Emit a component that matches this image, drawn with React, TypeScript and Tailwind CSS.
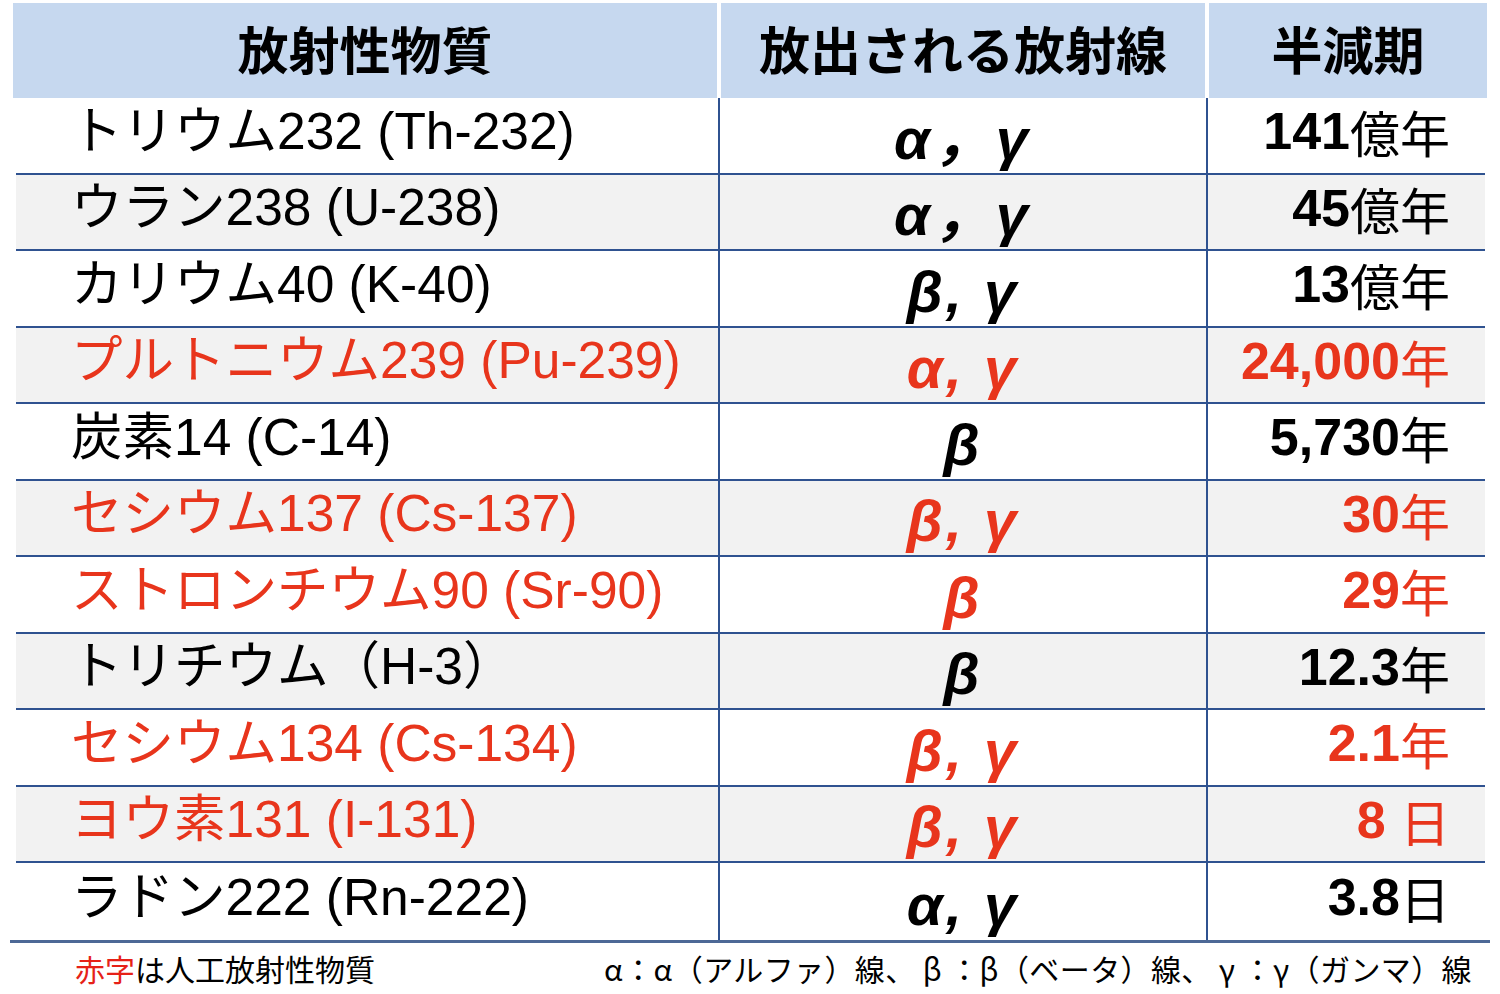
import React from 'react';

type Row = {
  name: string;
  rays: string;
  wide?: boolean;
  num: string;
  unit: string;
  red?: boolean;
};

const rows: Row[] = [
  { name: 'トリウム232 (Th-232)', rays: 'α，γ', wide: true, num: '141', unit: '億年' },
  { name: 'ウラン238 (U-238)', rays: 'α，γ', wide: true, num: '45', unit: '億年' },
  { name: 'カリウム40 (K-40)', rays: 'β, γ', num: '13', unit: '億年' },
  { name: 'プルトニウム239 (Pu-239)', rays: 'α, γ', num: '24,000', unit: '年', red: true },
  { name: '炭素14 (C-14)', rays: 'β', num: '5,730', unit: '年' },
  { name: 'セシウム137 (Cs-137)', rays: 'β, γ', num: '30', unit: '年', red: true },
  { name: 'ストロンチウム90 (Sr-90)', rays: 'β', num: '29', unit: '年', red: true },
  { name: 'トリチウム（H-3）', rays: 'β', num: '12.3', unit: '年' },
  { name: 'セシウム134 (Cs-134)', rays: 'β, γ', num: '2.1', unit: '年', red: true },
  { name: 'ヨウ素131 (I-131)', rays: 'β, γ', num: '8 ', unit: '日', red: true },
  { name: 'ラドン222 (Rn-222)', rays: 'α, γ', num: '3.8', unit: '日' },
];

const sans = "font-['Liberation_Sans','Noto_Sans_CJK_JP',sans-serif]";
const cjk = "font-['Noto_Sans_CJK_JP',sans-serif]";

export default function App() {
  return (
    <div className="w-[1500px] h-[994px] bg-white pt-[3px] overflow-hidden">
      {/* Header */}
      <div className={`flex h-[95px] ml-[13px] w-[1474px] gap-[4px] ${cjk} font-bold text-[51px] text-black`}>
        <div className="w-[704px] bg-[#c6d8ef] flex items-center justify-center pb-[4px]">放射性物質</div>
        <div className="w-[484px] bg-[#c6d8ef] flex items-center justify-center pb-[4px]">放出される放射線</div>
        <div className="flex-1 bg-[#c6d8ef] flex items-center justify-center pb-[4px]">半減期</div>
      </div>

      {/* Body */}
      <div className="ml-[16px] w-[1469px]">
        {rows.map((r, i) => {
          const last = i === rows.length - 1;
          const color = r.red ? 'text-[#e8351c]' : 'text-black';
          return (
            <div
              key={r.name}
              className={`flex h-[76.5px] ${last ? '' : 'border-b-2 border-[#2f5290]'} ${i % 2 === 1 ? 'bg-[#f2f2f2]' : 'bg-white'} ${color}`}
            >
              <div className={`w-[704px] border-r-2 border-[#2f5290] flex items-center pl-[55px] pb-[8px] text-[51.5px] ${sans}`}>
                {r.name}
              </div>
              <div className={`w-[488px] border-r-2 border-[#2f5290] flex items-center justify-center pt-[6px] text-[58px] font-bold italic ${sans} ${r.wide ? 'tracking-[4px]' : 'tracking-[3px]'}`}>
                {r.rays}
              </div>
              <div className="flex-1 flex items-center justify-end pr-[35px] pb-[8px] text-[52px] leading-none">
                <span className={`${sans} font-bold whitespace-pre`}>{r.num}</span>
                <span className={`${cjk} font-normal text-[50px]`}>{r.unit}</span>
              </div>
            </div>
          );
        })}
      </div>
      <div className="ml-[10px] w-[1480px] h-[3px] bg-[#4d6896]" />

      {/* Footer */}
      <div className={`flex justify-between items-center h-[52px] pl-[75px] pr-[28px] text-[30px] text-black ${cjk}`}>
        <div>
          <span className="text-[#e62117]">赤字</span>は人工放射性物質
        </div>
        <div className="tracking-[0.4px]">α：α（アルファ）線、 β ：β（ベータ）線、 γ ：γ（ガンマ）線</div>
      </div>
    </div>
  );
}
